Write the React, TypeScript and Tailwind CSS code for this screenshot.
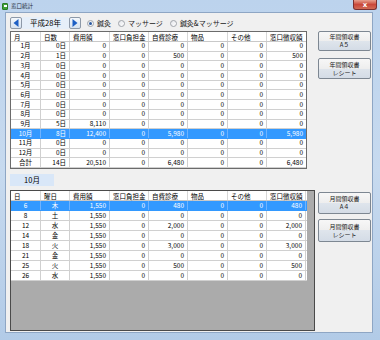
const W = ['w-[30px]', 'w-[29px]', 'w-[40px]', 'w-[39px]', 'w-[39px]', 'w-[40px]', 'w-[39px]', 'w-[39px]']

const H1 = ['月', '日数', '費用額', '窓口負担金', '自費診療', '物品', 'その他', '窓口徴収額']
const H2 = ['日', '曜日', '費用額', '窓口負担金', '自費診療', '物品', 'その他', '窓口徴収額']

const A1 = ['text-center', 'text-right pr-[3px]', 'text-right pr-[3px]', 'text-right pr-[3px]', 'text-right pr-[3px]', 'text-right pr-[3px]', 'text-right pr-[3px]', 'text-right pr-[3px]']
const A2 = ['text-center', 'text-center', 'text-right pr-[3px]', 'text-right pr-[3px]', 'text-right pr-[3px]', 'text-right pr-[3px]', 'text-right pr-[3px]', 'text-right pr-[3px]']

const zero = (m: string) => [m, '0日', '0', '0', '0', '0', '0', '0']

const yearRows = [
  zero('1月'),
  ['2月', '1日', '0', '0', '500', '0', '0', '500'],
  zero('3月'),
  zero('4月'),
  zero('5月'),
  zero('6月'),
  zero('7月'),
  zero('8月'),
  ['9月', '5日', '8,110', '0', '0', '0', '0', '0'],
  ['10月', '8日', '12,400', '0', '5,980', '0', '0', '5,980'],
  zero('11月'),
  zero('12月'),
  ['合計', '14日', '20,510', '0', '6,480', '0', '0', '6,480'],
]

const dayRows = [
  ['6', '木', '1,550', '0', '480', '0', '0', '480'],
  ['8', '土', '1,550', '0', '0', '0', '0', '0'],
  ['12', '水', '1,550', '0', '2,000', '0', '0', '2,000'],
  ['14', '金', '1,550', '0', '0', '0', '0', '0'],
  ['18', '火', '1,550', '0', '3,000', '0', '0', '3,000'],
  ['21', '金', '1,550', '0', '0', '0', '0', '0'],
  ['25', '火', '1,550', '0', '500', '0', '0', '500'],
  ['26', '水', '1,550', '0', '0', '0', '0', '0'],
]

function HeaderRow({ labels, lastBorder }: { labels: string[]; lastBorder: boolean }) {
  return (
    <div className="flex h-[10px] bg-white border-b border-[#c9c9c9]">
      {labels.map((l, i) => (
        <div
          key={i}
          className={`${W[i]} shrink-0 pl-[3px] leading-[10px] whitespace-nowrap ${i < 7 || lastBorder ? 'border-r border-[#d7d7d7]' : ''}`}
        >
          {l}
        </div>
      ))}
    </div>
  )
}

function Row({ cells, align, selected, h, lastBorder }: { cells: string[]; align: string[]; selected: boolean; h: string; lastBorder: boolean }) {
  return (
    <div className={`flex ${h} border-b ${selected ? 'bg-[#3399ff] text-white border-[#3399ff]' : 'bg-white border-[#d0d0d0]'}`}>
      {cells.map((c, i) => (
        <div
          key={i}
          className={`${W[i]} ${align[i]} shrink-0 flex items-center ${align[i].startsWith('text-center') ? 'justify-center' : 'justify-end'} whitespace-nowrap ${i < 7 || lastBorder ? (selected ? 'border-r border-[#6fb3ff]' : 'border-r border-[#d0d0d0]') : ''}`}
        >
          {c}
        </div>
      ))}
    </div>
  )
}

function ArrowButton({ dir }: { dir: 'left' | 'right' }) {
  return (
    <div className="w-[12px] h-[12px] shrink-0 border border-[#8d99a8] rounded-[2px] bg-gradient-to-b from-[#f4f8fc] to-[#d6e2f0] flex items-center justify-center">
      <svg width="6" height="8" viewBox="0 0 6 8">
        {dir === 'left' ? <polygon points="5.5,0 5.5,8 0.5,4" fill="#1d5fc4" /> : <polygon points="0.5,0 0.5,8 5.5,4" fill="#1d5fc4" />}
      </svg>
    </div>
  )
}

function Radio({ label, checked }: { label: string; checked?: boolean }) {
  return (
    <div className="flex items-center gap-[3px]">
      <div className="w-[7px] h-[7px] rounded-full border border-[#a0a4aa] bg-gradient-to-br from-[#e4e6ea] to-white flex items-center justify-center">
        {checked && <div className="w-[3px] h-[3px] rounded-full bg-[#2c5aa0]" />}
      </div>
      <span className="text-[7px] leading-[10px] text-[#1a1a1a]">{label}</span>
    </div>
  )
}

function Btn({ top, bottom, h }: { top: string; bottom: string; h: string }) {
  return (
    <div className={`${h} w-[53px] border border-[#7d8792] rounded-[2px] bg-[linear-gradient(#f7f7f7_0%,#eeeeee_50%,#dfe5ec_50%,#d4dce6_100%)] flex flex-col items-center justify-center text-[6px] leading-[8px] text-[#1a1a1a]`}>
      <span>{top}</span>
      <span>{bottom}</span>
    </div>
  )
}

export default function App() {
  return (
    <div className="w-[380px] h-[340px] flex flex-col bg-gradient-to-b from-[#bcd3ed] via-[#c7daef] to-[#b2cbe7] font-['Noto_Sans_CJK_JP',sans-serif] overflow-hidden">
      <div className="h-[12px] shrink-0 flex items-center relative pl-[2px]">
        <div className="w-[6px] h-[7px] bg-[#3fa23a] border border-[#2b7a27] rounded-[1px] flex items-start justify-center">
          <div className="w-[3px] h-[2px] bg-white mt-[1px]" />
        </div>
        <span className="ml-[3px] text-[5.5px] leading-[12px] text-[#1e2a3a]">窓口統計</span>
        <div className="absolute right-[3px] top-0 w-[24px] h-[10px] rounded-b-[3px] border border-[#7a3030] border-t-0 bg-gradient-to-b from-[#e6a08f] via-[#c9473a] to-[#d06a55] flex items-center justify-center text-white text-[7px] leading-[8px] font-bold font-['DejaVu_Sans',sans-serif]">
          x
        </div>
      </div>

      <div className="flex-1 flex ml-[5px] mr-[7px] mb-[7px] bg-[#f0f0f0] border border-[#8ea6c4] text-[6.5px] text-black">
        <div className="w-[305px] ml-[4px] flex flex-col pt-[4px] pb-[1px]">
          <div className="h-[12px] flex items-center">
            <ArrowButton dir="left" />
            <div className="w-[47px] h-[12px] bg-[#e6eff9] flex items-center justify-center text-[7.5px] leading-[12px]">平成28年</div>
            <ArrowButton dir="right" />
            <div className="flex items-center gap-[7px] ml-[6px]">
              <Radio label="鍼灸" checked />
              <Radio label="マッサージ" />
              <Radio label="鍼灸&マッサージ" />
            </div>
          </div>

          <div className="mt-[2px] w-[297px] border border-[#6b6b6b] bg-white">
            <HeaderRow labels={H1} lastBorder={false} />
            {yearRows.map((r, i) => (
              <Row key={i} cells={r} align={A1} selected={i === 9} h="h-[9.7px]" lastBorder={false} />
            ))}
          </div>

          <div className="mt-[5px] w-[44px] h-[12px] bg-[#d9e7f8] flex items-center justify-center text-[7.5px] leading-[12px]">10月</div>

          <div className="mt-[4px] flex-1 border border-[#4a4a4a] bg-[#ababab]">
            <div className="w-[296px]">
              <HeaderRow labels={H2} lastBorder />
              {dayRows.map((r, i) => (
                <Row key={i} cells={r} align={A2} selected={i === 0} h="h-[10px]" lastBorder />
              ))}
            </div>
          </div>
        </div>

        <div className="ml-[3px] w-[53px] flex flex-col pt-[18px]">
          <Btn top="年間領収書" bottom="A５" h="h-[20px]" />
          <div className="mt-[7px]">
            <Btn top="年間領収書" bottom="レシート" h="h-[21px]" />
          </div>
          <div className="mt-[113px]">
            <Btn top="月間領収書" bottom="A４" h="h-[22px]" />
          </div>
          <div className="mt-[5px]">
            <Btn top="月間領収書" bottom="レシート" h="h-[23px]" />
          </div>
        </div>
      </div>
    </div>
  )
}
